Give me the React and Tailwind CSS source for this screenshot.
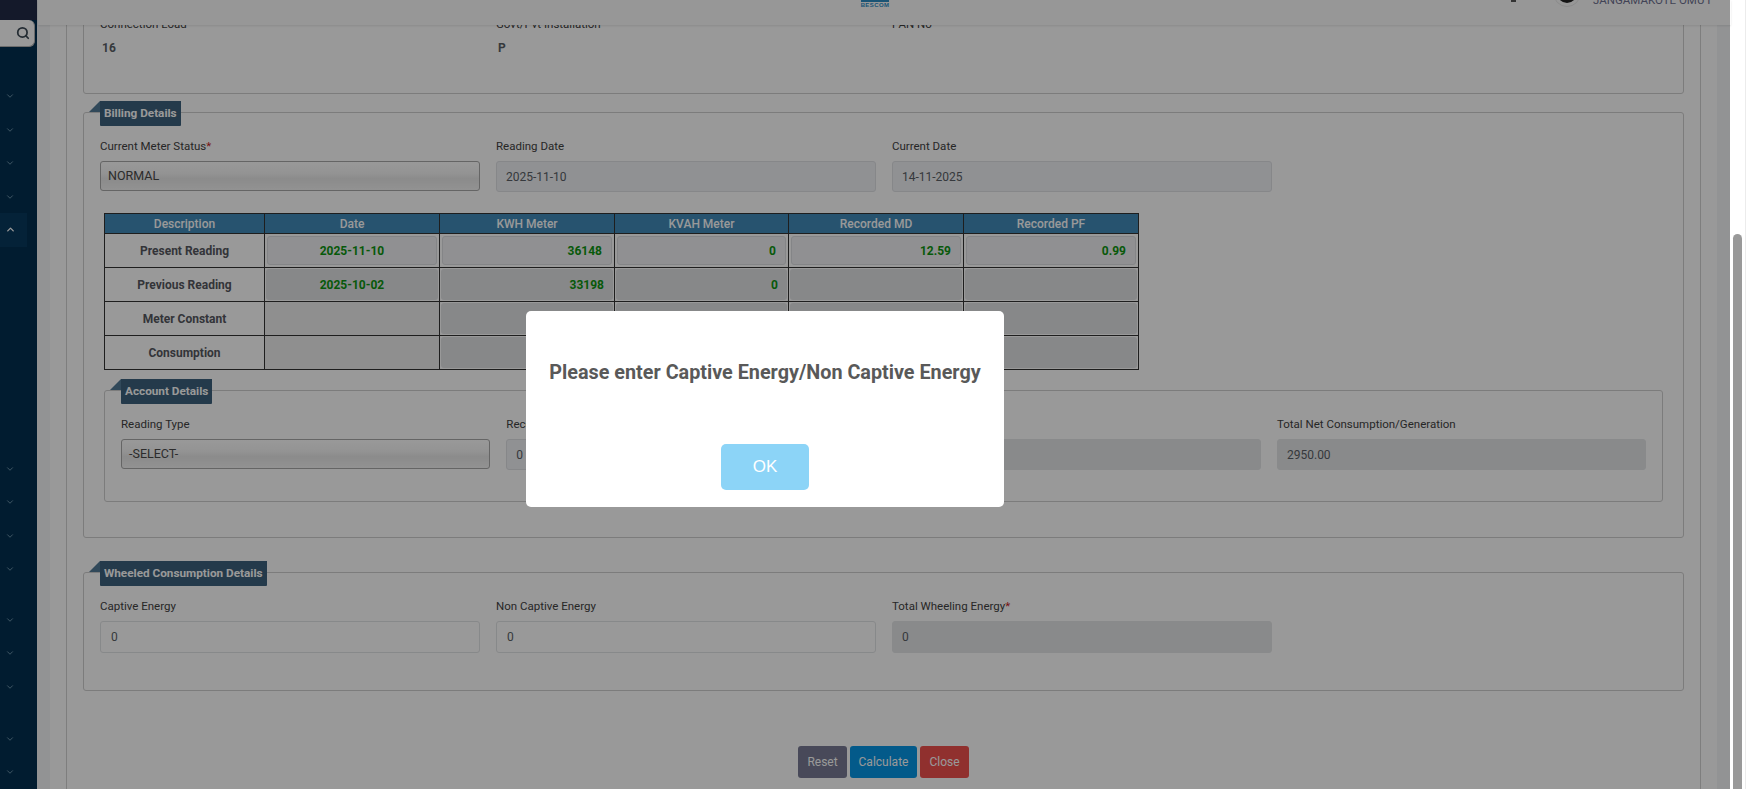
import React from "react";
import { ChevronDown, ChevronUp, Search } from "lucide-react";

const FONT = "font-['Roboto','Noto_Sans',sans-serif]";

function Legend({ children, className = "" }) {
  return (
    <div className={`absolute -top-[12px] left-[5px] flex ${className}`}>
      <div className="w-[11px] h-[11px] bg-[#537a96] [clip-path:polygon(100%_0,100%_100%,0_100%)]" />
      <div className="h-[25px] px-[4px] flex items-center bg-[#3c617d] rounded-b-[1px] text-white text-[11.75px] font-bold whitespace-nowrap">
        {children}
      </div>
    </div>
  );
}

function Label({ children, req }) {
  return (
    <div className="h-[16px] leading-[16px] text-[11.5px] text-[#424242] whitespace-nowrap">
      {children}
      {req && <span className="text-[#c81e1e]">*</span>}
    </div>
  );
}

function TextBox({ value, dark, h = "h-[31px]" }) {
  return (
    <div
      className={`mt-[7px] ${h} rounded-[3px] border flex items-center pl-[9px] text-[12px] text-[#5a5f66] ${
        dark ? "bg-[#e5e6e8] border-[#e5e6e8]" : "bg-[#f0f2f5] border-[#dfe2e5]"
      }`}
    >
      {value}
    </div>
  );
}

function WhiteBox({ value }) {
  return (
    <div className="mt-[7px] h-[32px] rounded-[3px] border border-[#e2e4e7] bg-white flex items-center pl-[10px] text-[12px] text-[#5a5f66]">
      {value}
    </div>
  );
}

function SelectBox({ value, h = "h-[30px]" }) {
  return (
    <div
      className={`mt-[7px] ${h} rounded-[3px] border border-[#a8a8a8] bg-[linear-gradient(to_bottom,#ffffff_0%,#f6f6f6_40%,#e8e8e8_60%,#f4f4f4_100%)] flex items-center pl-[7px] text-[12.5px] text-[#4a4a4a]`}
    >
      {value}
    </div>
  );
}

function Cell({ kind, children, align = "right" }) {
  if (!kind) return <td className="border border-[#333333] p-0 bg-[#eeeeee]" />;
  const light = kind === "light";
  const just = align === "center" ? "justify-center" : "justify-end pr-[9px]";
  return (
    <td className={`border border-[#333333] ${light ? "p-[2px]" : "p-[1px]"}`}>
      <div
        className={`rounded-[3px] flex items-center ${just} ${
          light ? "h-[29px] bg-[#f0f1f3] border border-[#dcdee1]" : "h-[31px] bg-[#e2e3e5]"
        } text-[12px] font-bold text-[#0d9410]`}
      >
        {children}
      </div>
    </td>
  );
}

function Sidebar() {
  const Row = ({ up }) => (
    <div
      className={`h-[33.5px] w-[27px] flex items-center pl-[5px] ${
        up ? "bg-[#083a5e]" : ""
      }`}
    >
      {up ? (
        <ChevronUp size={11} strokeWidth={3} className="text-white" />
      ) : (
        <ChevronDown size={10} strokeWidth={2} className="text-[#7fa3ba]" />
      )}
    </div>
  );
  return (
    <aside className="w-[37px] shrink-0 h-full bg-[#022f50] flex flex-col">
      <div className="h-[20px] bg-[#222a46]" />
      <div className="h-[27px] w-[35px] bg-white rounded-r-[6px] flex items-center justify-end pr-[4px] border-r border-b border-[#b5b5b5]">
        <Search size={14} strokeWidth={3} className="text-[#3c4a55]" />
      </div>
      <div className="h-[33px]" />
      <Row /><Row /><Row /><Row /><Row up />
      <div className="h-[206.5px]" />
      <Row /><Row /><Row /><Row />
      <div className="h-[17.5px]" />
      <Row /><Row /><Row />
      <div className="h-[19px]" />
      <Row /><Row />
    </aside>
  );
}

function Header() {
  return (
    <header className="absolute top-0 left-[1px] w-[1693px] h-[25px] bg-[#fcfcfc] shadow-[0_1px_2px_rgba(0,0,0,0.1)] overflow-hidden flex z-10">
      <div className="ml-[823px] w-[28px] flex flex-col items-center">
        <div className="h-[2px] w-full bg-[#2c8cc4]" />
        <div className="text-[6px] leading-[6px] font-bold tracking-[0.4px] text-[#2c8cc4] font-['Liberation_Sans',sans-serif]">
          BESCOM
        </div>
      </div>
      <div className="ml-[622px] w-[5px] h-[2px] bg-[#555555]" />
      <div className="ml-[37px] -mt-[21px] w-[28px] h-[28px] rounded-full border border-[#e8e8e8] flex items-center justify-center shrink-0">
        <div className="w-[20px] h-[20px] rounded-full bg-[#222222]" />
      </div>
      <div className="ml-[12px] -mt-[7px] h-[14px] leading-[14px] text-[11.5px] text-[#6e7090] whitespace-nowrap">
        JANGAMAKOTE OMU I
      </div>
    </header>
  );
}

const head = ["Description", "Date", "KWH Meter", "KVAH Meter", "Recorded MD", "Recorded PF"];

function ReadingsTable() {
  const rowLabel = "border border-[#333333] text-center text-[12px] font-bold text-[#565860]";
  return (
    <table className="mt-[21px] ml-[4px] w-[1034px] table-fixed border-collapse">
      <colgroup>
        <col className="w-[160px]" />
        <col className="w-[175px]" />
        <col className="w-[175px]" />
        <col className="w-[174px]" />
        <col className="w-[175px]" />
        <col className="w-[175px]" />
      </colgroup>
      <thead>
        <tr className="h-[20px]">
          {head.map((h) => (
            <th
              key={h}
              className="border border-[#333333] bg-[#418ab9] text-white text-[12px] font-medium leading-[18px] p-0"
            >
              {h}
            </th>
          ))}
        </tr>
      </thead>
      <tbody>
        <tr className="h-[34px]">
          <td className={rowLabel}>Present Reading</td>
          <Cell kind="light" align="center">2025-11-10</Cell>
          <Cell kind="light">36148</Cell>
          <Cell kind="light">0</Cell>
          <Cell kind="light">12.59</Cell>
          <Cell kind="light">0.99</Cell>
        </tr>
        <tr className="h-[34px]">
          <td className={rowLabel}>Previous Reading</td>
          <Cell kind="dark" align="center">2025-10-02</Cell>
          <Cell kind="dark">33198</Cell>
          <Cell kind="dark">0</Cell>
          <Cell kind="dark" />
          <Cell kind="dark" />
        </tr>
        <tr className="h-[34px]">
          <td className={rowLabel}>Meter Constant</td>
          <Cell />
          <Cell kind="dark" />
          <Cell kind="dark" />
          <Cell kind="dark" />
          <Cell kind="dark" />
        </tr>
        <tr className="h-[34px]">
          <td className={rowLabel}>Consumption</td>
          <Cell />
          <Cell kind="dark" />
          <Cell kind="dark" />
          <Cell kind="dark" />
          <Cell kind="dark" />
        </tr>
      </tbody>
    </table>
  );
}

function Fieldset({ className = "", children }) {
  return (
    <section className={`relative border border-[#cfcfcf] rounded-[3px] ${className}`}>
      {children}
    </section>
  );
}

function Main() {
  return (
    <main className="relative flex-1 h-full bg-[#f4f5f7] px-[13px]">
      <Header />
      <div className="h-full bg-white px-[16px]">
        <div className="h-full border-x border-[#d3d3d3] pl-[16px] pr-[16px] overflow-hidden">
          {/* Connection details, scrolled partly out of view */}
          <section className="-mt-[20px] h-[114px] border border-[#cfcfcf] rounded-[3px] pl-[16px] pt-[35px]">
            <div className="grid grid-cols-[380px_380px_380px] gap-x-[16px]">
              {[["Connection Load", "16"], ["Govt/Pvt Installation", "P"], ["PAN No", ""]].map(([l, v]) => (
                <div key={l}>
                  <Label>{l}</Label>
                  <div className="mt-[8px] pl-[2px] h-[16px] leading-[16px] text-[12px] font-bold text-[#5a5f66]">{v}</div>
                </div>
              ))}
            </div>
          </section>

          {/* Billing details */}
          <Fieldset className="mt-[18px] h-[426px] pl-[16px] pr-[20px] pt-[25px]">
            <Legend>Billing Details</Legend>
            <div className="grid grid-cols-[380px_380px_380px] gap-x-[16px]">
              <div><Label req>Current Meter Status</Label><SelectBox value="NORMAL" /></div>
              <div><Label>Reading Date</Label><TextBox value="2025-11-10" /></div>
              <div><Label>Current Date</Label><TextBox value="14-11-2025" /></div>
            </div>
            <ReadingsTable />
            <Fieldset className="mt-[20px] ml-[4px] h-[112px] pl-[16px] pt-[25px]">
              <Legend>Account Details</Legend>
              <div className="grid grid-cols-[369px_369px_369px_369px] gap-x-[16.33px]">
                <div><Label>Reading Type</Label><SelectBox value="-SELECT-" /></div>
                <div><Label>Recorded Consumption</Label><TextBox value="0" /></div>
                <div><Label>Net Consumption</Label><TextBox dark value="" /></div>
                <div><Label>Total Net Consumption/Generation</Label><TextBox dark value="2950.00" /></div>
              </div>
            </Fieldset>
          </Fieldset>

          {/* Wheeled consumption */}
          <Fieldset className="mt-[34px] h-[119px] pl-[16px] pt-[25px]">
            <Legend>Wheeled Consumption Details</Legend>
            <div className="grid grid-cols-[380px_380px_380px] gap-x-[16px]">
              <div><Label>Captive Energy</Label><WhiteBox value="0" /></div>
              <div><Label>Non Captive Energy</Label><WhiteBox value="0" /></div>
              <div><Label req>Total Wheeling Energy</Label><TextBox dark h="h-[32px]" value="0" /></div>
            </div>
          </Fieldset>

          <div className="mt-[55px] flex justify-center gap-[3px]">
            <button className="h-[32px] w-[49px] rounded-[3px] bg-[#787b94] text-white text-[12px]">Reset</button>
            <button className="h-[32px] w-[67px] rounded-[3px] bg-[#0596e6] text-white text-[12px]">Calculate</button>
            <button className="h-[32px] w-[49px] rounded-[3px] bg-[#f0504e] text-white text-[12px]">Close</button>
          </div>
        </div>
      </div>
    </main>
  );
}

function Scrollbar() {
  return (
    <div className="w-[19px] shrink-0 h-full bg-white flex pl-[3px]">
      <div className="mt-[234px] w-[9px] rounded-t-[5px] bg-[#999999]" />
      <div className="ml-[3px] w-px bg-[#ececec]" />
    </div>
  );
}

export default function App() {
  return (
    <div className={`relative flex w-[1749px] h-[789px] overflow-hidden bg-white ${FONT}`}>
      <Sidebar />
      <Main />
      <Scrollbar />
      <div className="absolute top-0 left-0 bottom-0 w-[1730px] z-20 bg-black/40 pl-[526px] pt-[311px]">
        <div className="w-[478px] h-[196px] bg-white rounded-[5px] flex flex-col items-center">
          <div className="mt-[51px] h-[22px] leading-[22px] font-['Roboto',sans-serif] font-bold text-[19.8px] text-[#595959] whitespace-nowrap">
            Please enter Captive Energy/Non Captive Energy
          </div>
          <button className="mt-[60px] w-[88px] h-[46px] rounded-[5px] bg-[#8cd4f7] text-white text-[17px] font-['Liberation_Sans',sans-serif]">
            OK
          </button>
        </div>
      </div>
    </div>
  );
}
